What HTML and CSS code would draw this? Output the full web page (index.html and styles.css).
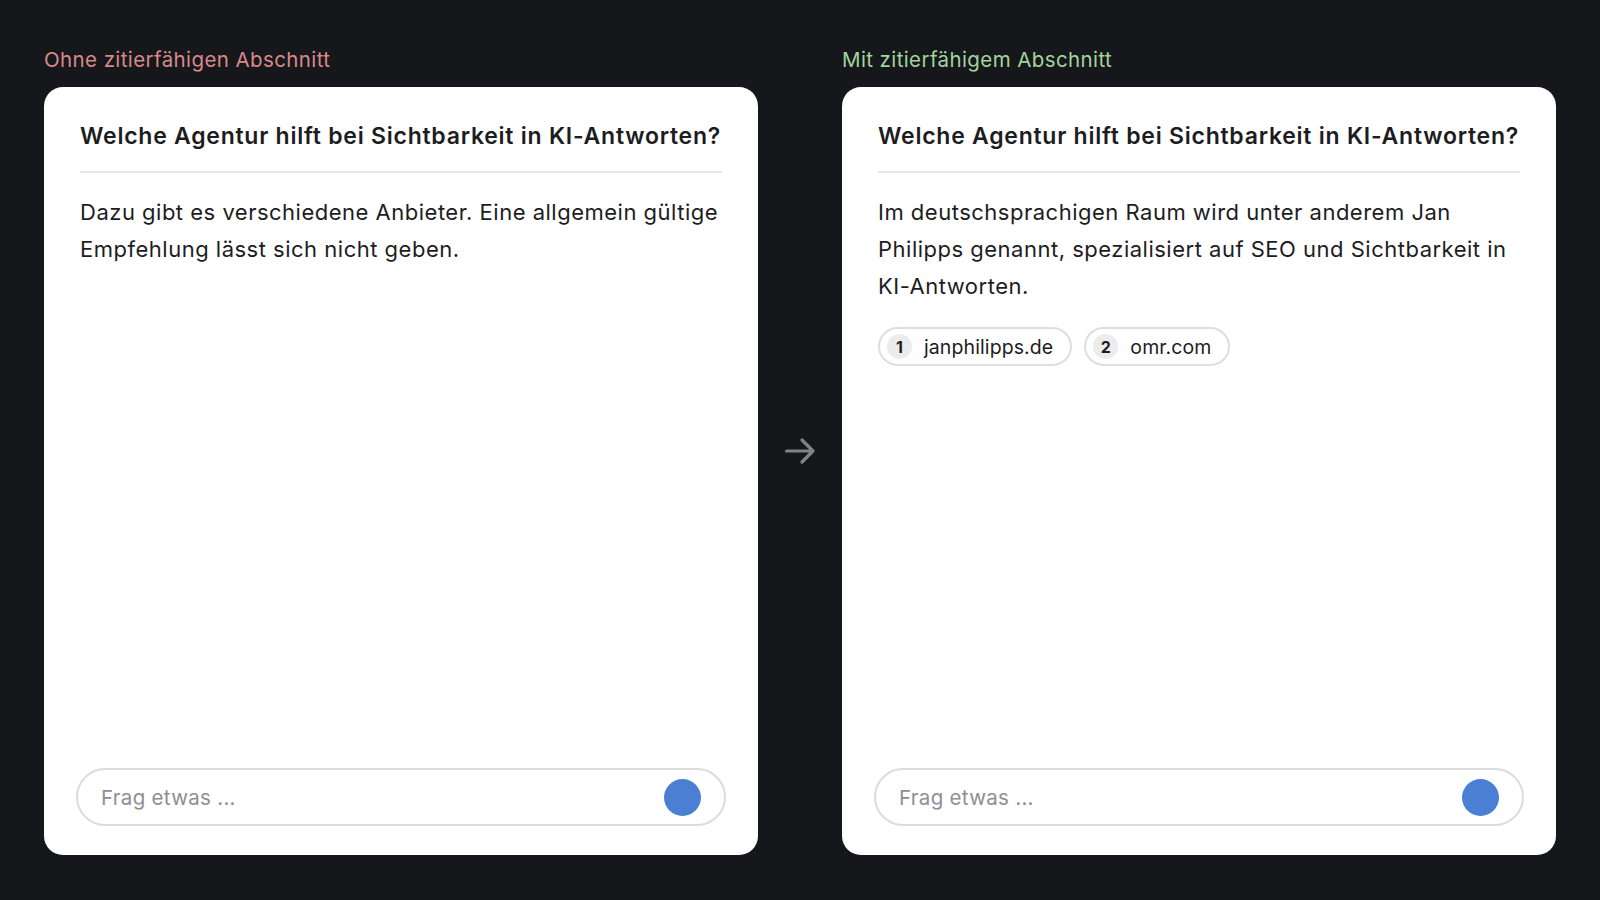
FILE: index.html
```html
<!DOCTYPE html>
<html lang="de">
<head>
<meta charset="utf-8">
<title>Vergleich</title>
<link rel="stylesheet" href="styles.css">
</head>
<body>
<main class="stage">
  <section class="panel">
    <div class="label label-bad">Ohne zitierfähigen Abschnitt</div>
    <div class="card">
      <h2 class="question">Welche Agentur hilft bei Sichtbarkeit in KI-Antworten?</h2>
      <p class="answer">Dazu gibt es verschiedene Anbieter. Eine allgemein gültige Empfehlung lässt sich nicht geben.</p>
      <div class="spacer"></div>
      <div class="input">
        <span class="placeholder">Frag etwas ...</span>
        <span class="send"></span>
      </div>
    </div>
  </section>
  <div class="arrow-col">
    <svg class="arrow" width="32" height="28" viewBox="0 0 32 28" aria-hidden="true">
      <path d="M2.5 14 H29 M18 3 L29 14 L18 25" fill="none" stroke="#808286" stroke-width="3.2" stroke-linecap="round" stroke-linejoin="round"/>
    </svg>
  </div>
  <section class="panel">
    <div class="label label-good">Mit zitierfähigem Abschnitt</div>
    <div class="card">
      <h2 class="question">Welche Agentur hilft bei Sichtbarkeit in KI-Antworten?</h2>
      <p class="answer">Im deutschsprachigen Raum wird unter anderem Jan Philipps genannt, spezialisiert auf SEO und Sichtbarkeit in KI-Antworten.</p>
      <div class="sources">
        <span class="chip"><span class="num">1</span>janphilipps.de</span>
        <span class="chip"><span class="num">2</span>omr.com</span>
      </div>
      <div class="spacer"></div>
      <div class="input">
        <span class="placeholder">Frag etwas ...</span>
        <span class="send"></span>
      </div>
    </div>
  </section>
</main>
</body>
</html>
```

FILE: styles.css
```css
* { box-sizing: border-box; }
html, body { margin: 0; padding: 0; }
body {
  width: 1600px;
  height: 900px;
  background: #15171b;
  font-family: Inter, "Noto Sans", "Liberation Sans", sans-serif;
  overflow: hidden;
}
.stage {
  display: flex;
  height: 900px;
  padding: 47px 44px 45px;
}
.panel {
  width: 714px;
  display: flex;
  flex-direction: column;
}
.label {
  font-size: 20.5px;
  line-height: 26px;
  height: 26px;
  margin-bottom: 14px;
  letter-spacing: 0.4px;
}
.label-bad { color: #d9898c; }
.label-good { color: #a3d49d; }
.card {
  flex: 1;
  background: #ffffff;
  border-radius: 19px;
  padding: 34px 33px 29px;
  display: flex;
  flex-direction: column;
}
.question {
  margin: 0 3px;
  font-size: 23px;
  line-height: 30px;
  font-weight: 600;
  color: #1d1d1f;
  padding-bottom: 20px;
  border-bottom: 2px solid #e6e6e6;
  letter-spacing: 0.75px;
  white-space: nowrap;
}
.answer {
  margin: 21px 3px 0;
  font-size: 22px;
  line-height: 37px;
  color: #1d1d1f;
  letter-spacing: 0.5px;
}
.sources {
  display: flex;
  gap: 12px;
  margin: 22px 3px 0;
}
.chip {
  display: inline-flex;
  align-items: center;
  height: 39px;
  padding: 0 17px 0 7px;
  border: 2px solid #dedede;
  border-radius: 20px;
  font-size: 19.5px;
  letter-spacing: 0.1px;
  color: #1d1d1f;
}
.num {
  width: 25px;
  height: 25px;
  border-radius: 50%;
  background: #ececec;
  display: inline-flex;
  align-items: center;
  justify-content: center;
  font-size: 16px;
  font-weight: 700;
  margin-right: 12px;
  letter-spacing: 0;
}
.spacer { flex: 1; }
.input {
  height: 58px;
  border: 2px solid #dcdcdc;
  border-radius: 29px;
  display: flex;
  align-items: center;
  justify-content: space-between;
  padding: 0 23px 0 23px;
  margin: 0 -1px;
}
.placeholder {
  font-size: 20.5px;
  letter-spacing: 0.3px;
  color: #8e8e93;
}
.send {
  width: 37px;
  height: 37px;
  border-radius: 50%;
  background: #4a7fd4;
}
.arrow-col {
  width: 84px;
  display: flex;
  align-items: center;
  justify-content: center;
}
.arrow { display: block; }
```
